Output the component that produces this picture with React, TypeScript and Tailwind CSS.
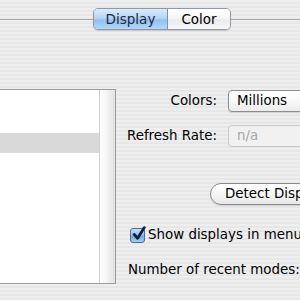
import React from "react";

const FONT = "font-['Lucida_Grande','DejaVu_Sans',sans-serif]";

function Tabs() {
  return (
    <div className="flex h-[22px] w-[138px] overflow-hidden rounded-[5px] border border-[#8d9aab] shadow-[0_1px_1px_rgba(0,0,0,0.15)]">
      <div className="flex w-[74px] items-center justify-center border-r border-[#7d93b0] bg-[linear-gradient(to_bottom,#dcebfb_0%,#b6d5f5_45%,#93c1ef_55%,#b4d7f7_100%)] text-[13.5px] text-[#1b2a3c]">
        Display
      </div>
      <div className="flex flex-1 items-center justify-center bg-[linear-gradient(to_bottom,#ffffff_0%,#f7f7f7_45%,#eaeaea_55%,#f8f8f8_100%)] text-[13.5px] text-black">
        Color
      </div>
    </div>
  );
}

function ListBox() {
  return (
    <div className="flex h-[195px] w-[116px] shrink-0 border-y border-r border-[#9c9c9c] bg-white">
      <div className="flex flex-1 flex-col">
        <div className="h-[43px]" />
        <div className="h-[20px] bg-[#d9d9d9]" />
      </div>
      <div className="w-[16px] border-l border-[#d0d0d0] bg-[linear-gradient(to_right,#ffffff_0%,#f6f6f6_40%,#e2e2e2_100%)]" />
    </div>
  );
}

export default function App() {
  return (
    <div
      className={`${FONT} h-[300px] w-[300px] overflow-hidden bg-[repeating-linear-gradient(to_bottom,#eeeeee_0px,#eeeeee_2px,#e7e7e7_2px,#e7e7e7_4px)] text-black`}
    >
      {/* tab strip */}
      <div className="mt-[8px] flex h-[22px] items-center">
        <div className="h-px w-[93px] bg-[#a9a9a9]" />
        <Tabs />
        <div className="h-px flex-1 bg-[#a9a9a9]" />
      </div>

      <div className="mt-[59px] flex">
        <ListBox />

        <div className="flex flex-1 flex-col pt-[1px] text-[13.4px]">
          <div className="grid grid-cols-[101px_1fr] items-center gap-x-[11px] gap-y-[13px]">
            <div className="text-right">Colors:</div>
            <div className="flex h-[22px] w-[120px] items-center rounded-[4px] border border-[#8e8e8e] bg-[linear-gradient(to_bottom,#ffffff_0%,#f8f8f8_50%,#ececec_100%)] pl-[8px] shadow-[0_1px_1px_rgba(0,0,0,0.12)]">
              Millions
            </div>
            <div className="text-right">Refresh Rate:</div>
            <div className="flex h-[22px] w-[120px] items-center rounded-[4px] border border-[#c9c9c9] bg-[#f1f1f1] pl-[8px] text-[#a6a6a6]">
              n/a
            </div>
          </div>

          <div className="ml-[94px] mt-[36px] flex h-[22px] w-[120px] items-center rounded-l-full border border-[#8a8a8a] bg-[linear-gradient(to_bottom,#ffffff_0%,#f6f6f6_50%,#e8e8e8_100%)] pl-[14px] whitespace-nowrap shadow-[0_1px_1px_rgba(0,0,0,0.12)]">
            Detect Displays
          </div>

          <div className="ml-[14px] mt-[20px] flex items-center gap-[3px] whitespace-nowrap">
            <div className="relative h-[15px] w-[15px] shrink-0 rounded-[3px] border border-[#4b6f9c] bg-[linear-gradient(to_bottom,#c6e0fa_0%,#8cbcec_50%,#6ea9e6_55%,#a5cdf4_100%)]">
              <svg viewBox="0 0 15 15" className="absolute -top-[3px] left-0 h-[16px] w-[16px]">
                <path d="M3 8 L6.2 11.5 L12.5 1.5" fill="none" stroke="#13223b" strokeWidth="2.6" strokeLinecap="round" strokeLinejoin="round" />
              </svg>
            </div>
            <span>Show displays in menu bar</span>
          </div>

          <div className="ml-[12px] mt-[15px] whitespace-nowrap">Number of recent modes:</div>
        </div>
      </div>
    </div>
  );
}
